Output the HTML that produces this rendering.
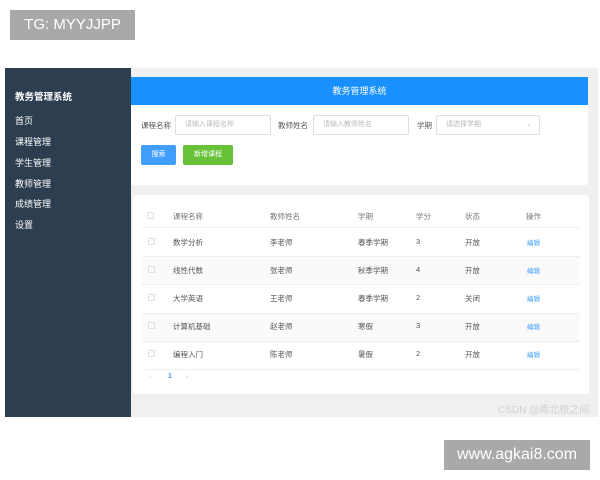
<!DOCTYPE html>
<html><head><meta charset="utf-8"><style>
*{margin:0;padding:0;box-sizing:border-box}
body{width:600px;height:480px;background:#fff;position:relative;overflow:hidden;font-family:"Liberation Sans","Noto Sans CJK SC",sans-serif}
.a{position:absolute}
.tag{background:#a9a9a9;color:#fff;font-size:15px;text-align:center}
.side{left:5px;top:68px;width:126px;height:349px;background:#2c3e50;color:#fff}
.side div{position:absolute;left:10px;font-size:9px}
.main{left:131px;top:68px;width:467px;height:349px;background:#f0f0f0}
.hdr{left:131px;top:77px;width:457px;height:28px;background:#1890ff;color:#fff;font-size:9px;text-align:center;line-height:28px}
.card{background:#fff;border-radius:3px}
.lbl{font-size:7.5px;color:#555}
.inp{border:1px solid #dcdfe6;border-radius:2px;background:#fff;font-size:7px;color:#bbb;padding-left:9px;line-height:18px;height:20px}
.btn{color:#fff;font-size:7px;text-align:center;line-height:20px;border-radius:2px;height:20px}
.t{font-size:7.5px;color:#555}
.cb{width:7px;height:7px;border:1px solid #ddd;border-radius:1px;background:#fff}
.line{height:1px;background:#ebeef5;left:142px;width:438px}
.stripe{background:#fafafa;left:142px;width:438px;height:28px}
</style></head><body>
<div class="a tag" style="left:10px;top:10px;width:125px;height:30px;line-height:30px">TG: MYYJJPP</div>
<div class="a main"></div>
<div class="a side">
<div style="top:21px;font-weight:bold;font-size:9.5px">教务管理系统</div>
<div style="top:46px">首页</div>
<div style="top:67px">课程管理</div>
<div style="top:88px">学生管理</div>
<div style="top:109px">教师管理</div>
<div style="top:129px">成绩管理</div>
<div style="top:150px">设置</div>
</div>
<div class="a hdr">教务管理系统</div>
<div class="a card" style="left:131px;top:105px;width:457px;height:80px;border-radius:0 0 3px 3px"></div>
<div class="a lbl" style="left:141px;top:120px">课程名称</div>
<div class="a inp" style="left:175px;top:115px;width:96px">请输入课程名称</div>
<div class="a lbl" style="left:278px;top:120px">教师姓名</div>
<div class="a inp" style="left:313px;top:115px;width:96px">请输入教师姓名</div>
<div class="a lbl" style="left:417px;top:120px">学期</div>
<div class="a inp" style="left:436px;top:115px;width:104px">请选择学期<span style="position:absolute;right:7px;color:#bbb">⌄</span></div>
<div class="a btn" style="left:141px;top:145px;width:35px;background:#409eff">搜索</div>
<div class="a btn" style="left:183px;top:145px;width:50px;background:#67c23a">新增课程</div>
<div class="a card" style="left:133px;top:195px;width:456px;height:199px"></div>
<div class="a stripe" style="top:256px"></div>
<div class="a stripe" style="top:313px"></div>
<div class="a line" style="top:227px"></div>
<div class="a line" style="top:256px"></div>
<div class="a line" style="top:284px"></div>
<div class="a line" style="top:313px"></div>
<div class="a line" style="top:341px"></div>
<div class="a line" style="top:369px"></div>
<div class="a cb" style="left:147px;top:212px"></div>
<div class="a t" style="left:173px;top:211px;color:#777">课程名称</div>
<div class="a t" style="left:270px;top:211px;color:#777">教师姓名</div>
<div class="a t" style="left:358px;top:211px;color:#777">学期</div>
<div class="a t" style="left:416px;top:211px;color:#777">学分</div>
<div class="a t" style="left:465px;top:211px;color:#777">状态</div>
<div class="a t" style="left:526px;top:211px;color:#777">操作</div>

<div class="a cb" style="left:148px;top:238px"></div>
<div class="a t" style="left:173px;top:237px">数学分析</div><div class="a t" style="left:270px;top:237px">李老师</div><div class="a t" style="left:358px;top:237px">春季学期</div><div class="a t" style="left:416px;top:237px">3</div><div class="a t" style="left:465px;top:237px">开放</div><div class="a t" style="left:527px;top:237px;color:#409eff;font-size:6.5px">编辑</div>
<div class="a cb" style="left:148px;top:266px"></div>
<div class="a t" style="left:173px;top:265px">线性代数</div><div class="a t" style="left:270px;top:265px">张老师</div><div class="a t" style="left:358px;top:265px">秋季学期</div><div class="a t" style="left:416px;top:265px">4</div><div class="a t" style="left:465px;top:265px">开放</div><div class="a t" style="left:527px;top:265px;color:#409eff;font-size:6.5px">编辑</div>
<div class="a cb" style="left:148px;top:294px"></div>
<div class="a t" style="left:173px;top:293px">大学英语</div><div class="a t" style="left:270px;top:293px">王老师</div><div class="a t" style="left:358px;top:293px">春季学期</div><div class="a t" style="left:416px;top:293px">2</div><div class="a t" style="left:465px;top:293px">关闭</div><div class="a t" style="left:527px;top:293px;color:#409eff;font-size:6.5px">编辑</div>
<div class="a cb" style="left:148px;top:322px"></div>
<div class="a t" style="left:173px;top:321px">计算机基础</div><div class="a t" style="left:270px;top:321px">赵老师</div><div class="a t" style="left:358px;top:321px">寒假</div><div class="a t" style="left:416px;top:321px">3</div><div class="a t" style="left:465px;top:321px">开放</div><div class="a t" style="left:527px;top:321px;color:#409eff;font-size:6.5px">编辑</div>
<div class="a cb" style="left:148px;top:350px"></div>
<div class="a t" style="left:173px;top:349px">编程入门</div><div class="a t" style="left:270px;top:349px">陈老师</div><div class="a t" style="left:358px;top:349px">暑假</div><div class="a t" style="left:416px;top:349px">2</div><div class="a t" style="left:465px;top:349px">开放</div><div class="a t" style="left:527px;top:349px;color:#409eff;font-size:6.5px">编辑</div>

<div class="a t" style="left:149px;top:372px;color:#ccc">‹</div>
<div class="a t" style="left:168px;top:373px;color:#409eff;font-weight:bold;font-size:7px">1</div>
<div class="a t" style="left:186px;top:372px;color:#ccc">›</div>
<div class="a" style="left:498px;top:401px;font-size:10px;color:#d0d0d0">CSDN @南北极之间</div>
<div class="a tag" style="left:444px;top:440px;width:146px;height:30px;line-height:30px;font-size:16px">www.agkai8.com</div>
</body></html>
